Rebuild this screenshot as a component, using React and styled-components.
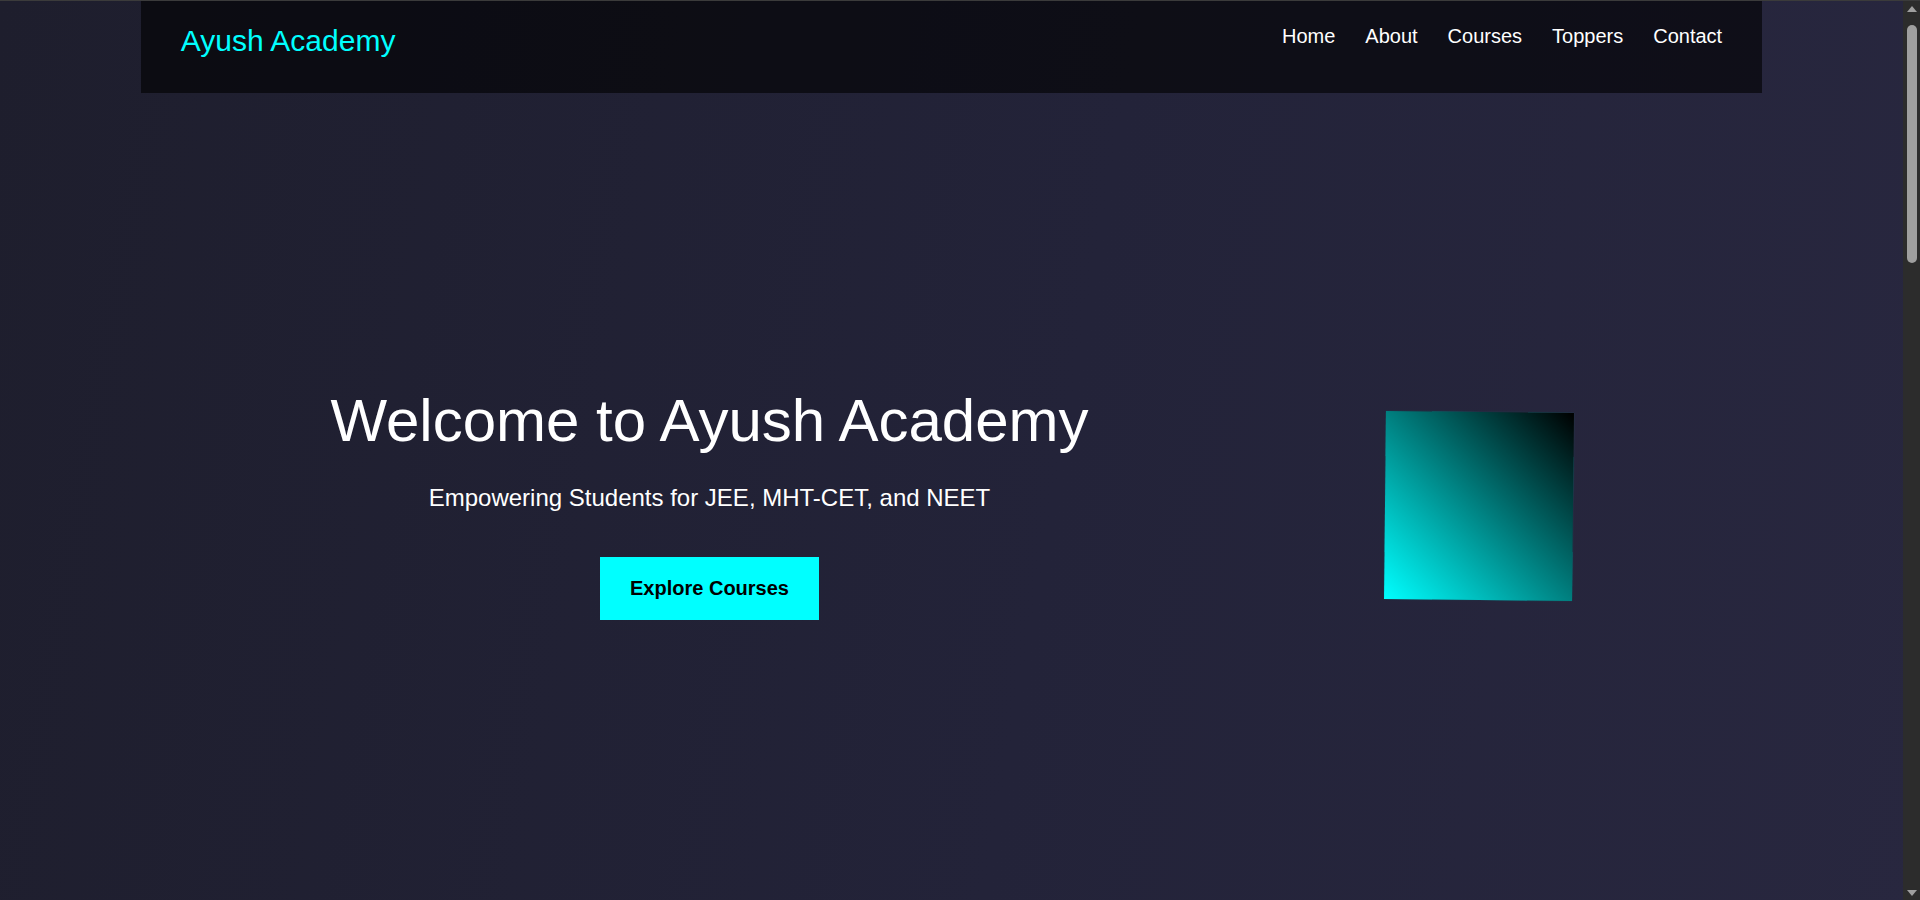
import React from 'react';
import styled, { createGlobalStyle } from 'styled-components';

const GlobalStyle = createGlobalStyle`
  * {
    box-sizing: border-box;
  }
  html {
    border-top: 1px solid #3b3b3b;
  }
  body {
    margin: 0;
    font-family: 'Liberation Sans', Arial, sans-serif;
    color: #fff;
    background: linear-gradient(100deg, #1e1e2d 0%, #232339 55%, #28273f 100%);
    background-attachment: fixed;
    overflow: hidden;
  }
`;

const Frame = styled.div`
  display: flex;
  height: 899px;
`;

const Page = styled.main`
  flex: 1;
  min-width: 0;
`;

/** window scrollbar strip on the right **/
const ScrollTrack = styled.div`
  width: 17px;
  background-color: #2c2c2c;
  display: flex;
  flex-direction: column;
  align-items: center;
  padding: 5px 0 4px;
`;

const ScrollArrow = styled.div`
  width: 0;
  height: 0;
  border-left: 5px solid transparent;
  border-right: 5px solid transparent;
  border-bottom: ${props => (props.down ? 'none' : '6px solid #9f9f9f')};
  border-top: ${props => (props.down ? '6px solid #9f9f9f' : 'none')};
  margin-top: ${props => (props.down ? 'auto' : '0')};
`;

const ScrollThumb = styled.div`
  width: 10px;
  height: 238px;
  margin-top: 13px;
  border-radius: 5px;
  background-color: #9f9f9f;
`;

/** top bar **/
const Header = styled.header`
  width: 85.2%;
  height: 92px;
  margin: 0 auto;
  padding: 23px 40px 0;
  display: flex;
  justify-content: space-between;
  align-items: flex-start;
  background-color: rgba(0, 0, 0, 0.6);
`;

const Logo = styled.h1`
  margin: 0;
  font-size: 30px;
  font-weight: 400;
  color: #0ff;
`;

const Nav = styled.nav`
  display: flex;
  gap: 30px;
  padding-top: 1px;
`;

const NavLink = styled.a`
  color: #fff;
  text-decoration: none;
  font-size: 20px;
  cursor: pointer;
`;

/** hero **/
const Hero = styled.section`
  min-height: 817px;
  display: flex;
  justify-content: center;
  align-items: center;
  gap: 296px;
`;

const HeroText = styled.div`
  text-align: center;
`;

const Title = styled.h2`
  margin: 3px 0 29px;
  font-size: 60px;
  font-weight: 400;
`;

const Subtitle = styled.p`
  margin: 0 0 45px;
  font-size: 24px;
`;

const Button = styled.button`
  background-color: #0ff;
  color: #000;
  border: none;
  padding: 20px 30px;
  font-family: inherit;
  font-size: 20px;
  font-weight: 700;
  cursor: pointer;
`;

const Cube = styled.div`
  width: 188px;
  height: 188px;
  margin-top: 8px;
  background: linear-gradient(45deg, #0ff, #000);
  transform: rotate(0.6deg);
  box-shadow: 0 0 1px rgba(0, 160, 160, 0.6);
`;

const links = ['Home', 'About', 'Courses', 'Toppers', 'Contact'];

export default function App() {
  return (
    <>
      <GlobalStyle />
      <Frame>
        <Page>
          <Header>
            <Logo>Ayush Academy</Logo>
            <Nav>
              {links.map(l => (
                <NavLink key={l}>{l}</NavLink>
              ))}
            </Nav>
          </Header>

          <Hero>
            <HeroText>
              <Title>Welcome to Ayush Academy</Title>
              <Subtitle>Empowering Students for JEE, MHT-CET, and NEET</Subtitle>
              <Button>Explore Courses</Button>
            </HeroText>
            <Cube />
          </Hero>
        </Page>
        <ScrollTrack>
          <ScrollArrow />
          <ScrollThumb />
          <ScrollArrow down />
        </ScrollTrack>
      </Frame>
    </>
  );
}
